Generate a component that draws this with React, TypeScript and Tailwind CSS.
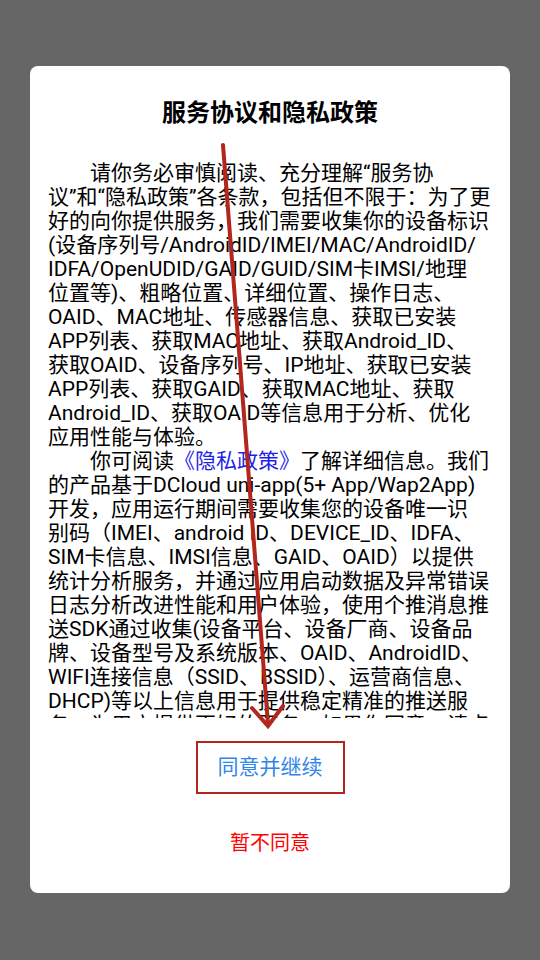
import { ReactNode } from 'react'

const font = { fontFamily: "Roboto, 'Noto Sans CJK SC', sans-serif" }

// line breaks follow the original Android text view
const intro = [
  '请你务必审慎阅读、充分理解“服务协',
  '议”和“隐私政策”各条款，包括但不限于：为了更',
  '好的向你提供服务，我们需要收集你的设备标识',
  '(设备序列号/AndroidID/IMEI/MAC/AndroidID/',
  'IDFA/OpenUDID/GAID/GUID/SIM卡IMSI/地理',
  '位置等)、粗略位置、详细位置、操作日志、',
  'OAID、MAC地址、传感器信息、获取已安装',
  'APP列表、获取MAC地址、获取Android_ID、',
  '获取OAID、设备序列号、IP地址、获取已安装',
  'APP列表、获取GAID、获取MAC地址、获取',
  'Android_ID、获取OAID等信息用于分析、优化',
  '应用性能与体验。',
]

const details = [
  '的产品基于DCloud uni-app(5+ App/Wap2App)',
  '开发，应用运行期间需要收集您的设备唯一识',
  '别码（IMEI、android ID、DEVICE_ID、IDFA、',
  'SIM卡信息、IMSI信息、GAID、OAID）以提供',
  '统计分析服务，并通过应用启动数据及异常错误',
  '日志分析改进性能和用户体验，使用个推消息推',
  '送SDK通过收集(设备平台、设备厂商、设备品',
  '牌、设备型号及系统版本、OAID、AndroidID、',
  'WIFI连接信息（SSID、BSSID）、运营商信息、',
  'DHCP)等以上信息用于提供稳定精准的推送服',
  '务，为用户提供更好的服务，如果你同意，请点',
  '击下面按钮开始接受我们的服务。',
]

const Line = ({ children, indent }: { children: ReactNode; indent?: boolean }) => (
  <div className={`whitespace-nowrap ${indent ? 'pl-[42px]' : ''}`}>{children}</div>
)

const Arrow = () => (
  <svg
    className="absolute inset-0 pointer-events-none"
    width="540"
    height="960"
    viewBox="0 0 540 960"
  >
    <g stroke="#b3261e" strokeWidth="4" strokeLinecap="round" fill="none">
      <line x1="223" y1="145" x2="268" y2="724" />
      <polyline points="252,708 268,726 283,706" strokeLinejoin="miter" />
    </g>
  </svg>
)

export default function App() {
  return (
    <div className="relative w-[540px] h-[960px] bg-[#666666] overflow-hidden" style={font}>
      {/* Dialog */}
      <div className="absolute left-[30px] top-[66px] w-[480px] h-[827px] bg-white rounded-[8px] flex flex-col">
        <h1 className="pt-[31px] text-center text-[24px] leading-[32px] font-bold text-black">
          服务协议和隐私政策
        </h1>

        <div className="mt-[32px] mx-[18px] h-[557px] overflow-hidden text-[21px] leading-[24px] text-black">
          {intro.map((line, i) => (
            <Line key={i} indent={i === 0}>
              {line}
            </Line>
          ))}
          <Line indent>
            你可阅读<span className="text-[#1f1fe6]">《隐私政策》</span>了解详细信息。我们
          </Line>
          {details.map((line, i) => (
            <Line key={i}>{line}</Line>
          ))}
        </div>

        <div className="mt-[23px] flex justify-center">
          <button className="w-[149px] h-[53px] border-2 border-[#b3261e] text-[21px] text-[#2f86e8]">
            同意并继续
          </button>
        </div>

        <div className="mt-[34px] flex justify-center">
          <button className="text-[20px] leading-[30px] text-[#f00]">暂不同意</button>
        </div>
      </div>

      <Arrow />
    </div>
  )
}
